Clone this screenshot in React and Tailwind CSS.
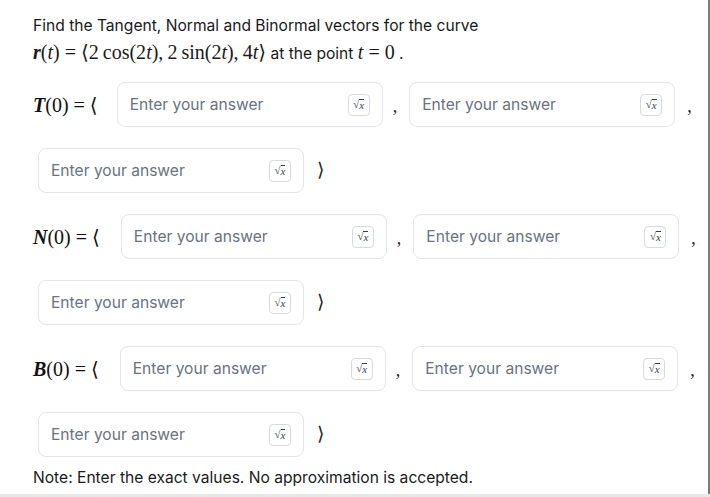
import React from "react";

const serif = { fontFamily: '"Liberation Serif", "DejaVu Serif", serif' };

const SqrtButton = () => (
  <button
    type="button"
    className="flex h-[22px] w-[22px] shrink-0 items-center justify-center rounded-[4px] border border-[#d7dae0] bg-white text-[11px] leading-none text-[#374151]"
    style={serif}
  >
    √<span className="border-t border-[#374151] italic leading-[10px]">x</span>
  </button>
);

const AnswerBox = ({ className = "" }) => (
  <div
    className={`flex h-[45px] w-[266px] shrink-0 items-center rounded-lg border border-[#e3e5ea] bg-white pl-3 pr-3 ${className}`}
  >
    <input
      type="text"
      placeholder="Enter your answer"
      className="min-w-0 flex-1 bg-transparent text-[15.6px] text-[#1f2937] outline-none placeholder:text-[#6b7280]"
    />
    <SqrtButton />
  </div>
);

const Comma = ({ className = "" }) => (
  <span className={`text-[18px] leading-none text-[#222] ${className}`} style={serif}>
    ,
  </span>
);

const VectorRow = ({ letter, gap }) => (
  <div className="flex flex-col gap-[21px]">
    <div className="flex h-[45px] items-center">
      <span className="whitespace-pre text-[20px] text-[#111]" style={serif}>
        <b className="italic">{letter}</b>(0) = ⟨
      </span>
      <AnswerBox className={gap} />
      <Comma className="ml-[10px] mr-[12px] mt-[2px]" />
      <AnswerBox />
      <Comma className="ml-[12px] mt-[2px]" />
    </div>
    <div className="flex h-[45px] items-center pl-[5px]">
      <AnswerBox />
      <span className="ml-[13px] text-[19px] text-[#222]" style={serif}>
        ⟩
      </span>
    </div>
  </div>
);

export default function App() {
  return (
    <div className="h-[497px] w-[710px] overflow-hidden bg-[#e8e8e8]">
      <div
        className="h-[494px] w-[710px] border-r-2 border-r-[#7c7c7c] bg-white pl-[33px] pt-[13px] text-[#1a1a1a]"
        style={{ fontFamily: 'Inter, "Noto Sans", sans-serif' }}
      >
        <p className="text-[15.6px] leading-[26px]">
          Find the Tangent, Normal and Binormal vectors for the curve
        </p>
        <p className="text-[15.6px] leading-[26px]">
          <span className="whitespace-pre text-[20px]" style={serif}>
            <b className="italic">r</b>(<i>t</i>) = ⟨2{"\u2009"}cos(2<i>t</i>),{"\u2009"}2{"\u2009"}sin(2<i>t</i>),{"\u2009"}4<i>t</i>⟩
          </span>
          <span>{"  "}at the point </span>
          <span className="whitespace-pre text-[20px]" style={serif}>
            <i>t</i> = 0
          </span>
          <span> .</span>
        </p>

        <div className="mt-[15px] flex flex-col gap-[21px]">
          <VectorRow letter="T" gap="ml-[19px]" />
          <VectorRow letter="N" gap="ml-[21px]" />
          <VectorRow letter="B" gap="ml-[21px]" />
        </div>

        <p className="mt-[9px] text-[15.6px] leading-6">
          Note: Enter the exact values. No approximation is accepted.
        </p>
      </div>
    </div>
  );
}
